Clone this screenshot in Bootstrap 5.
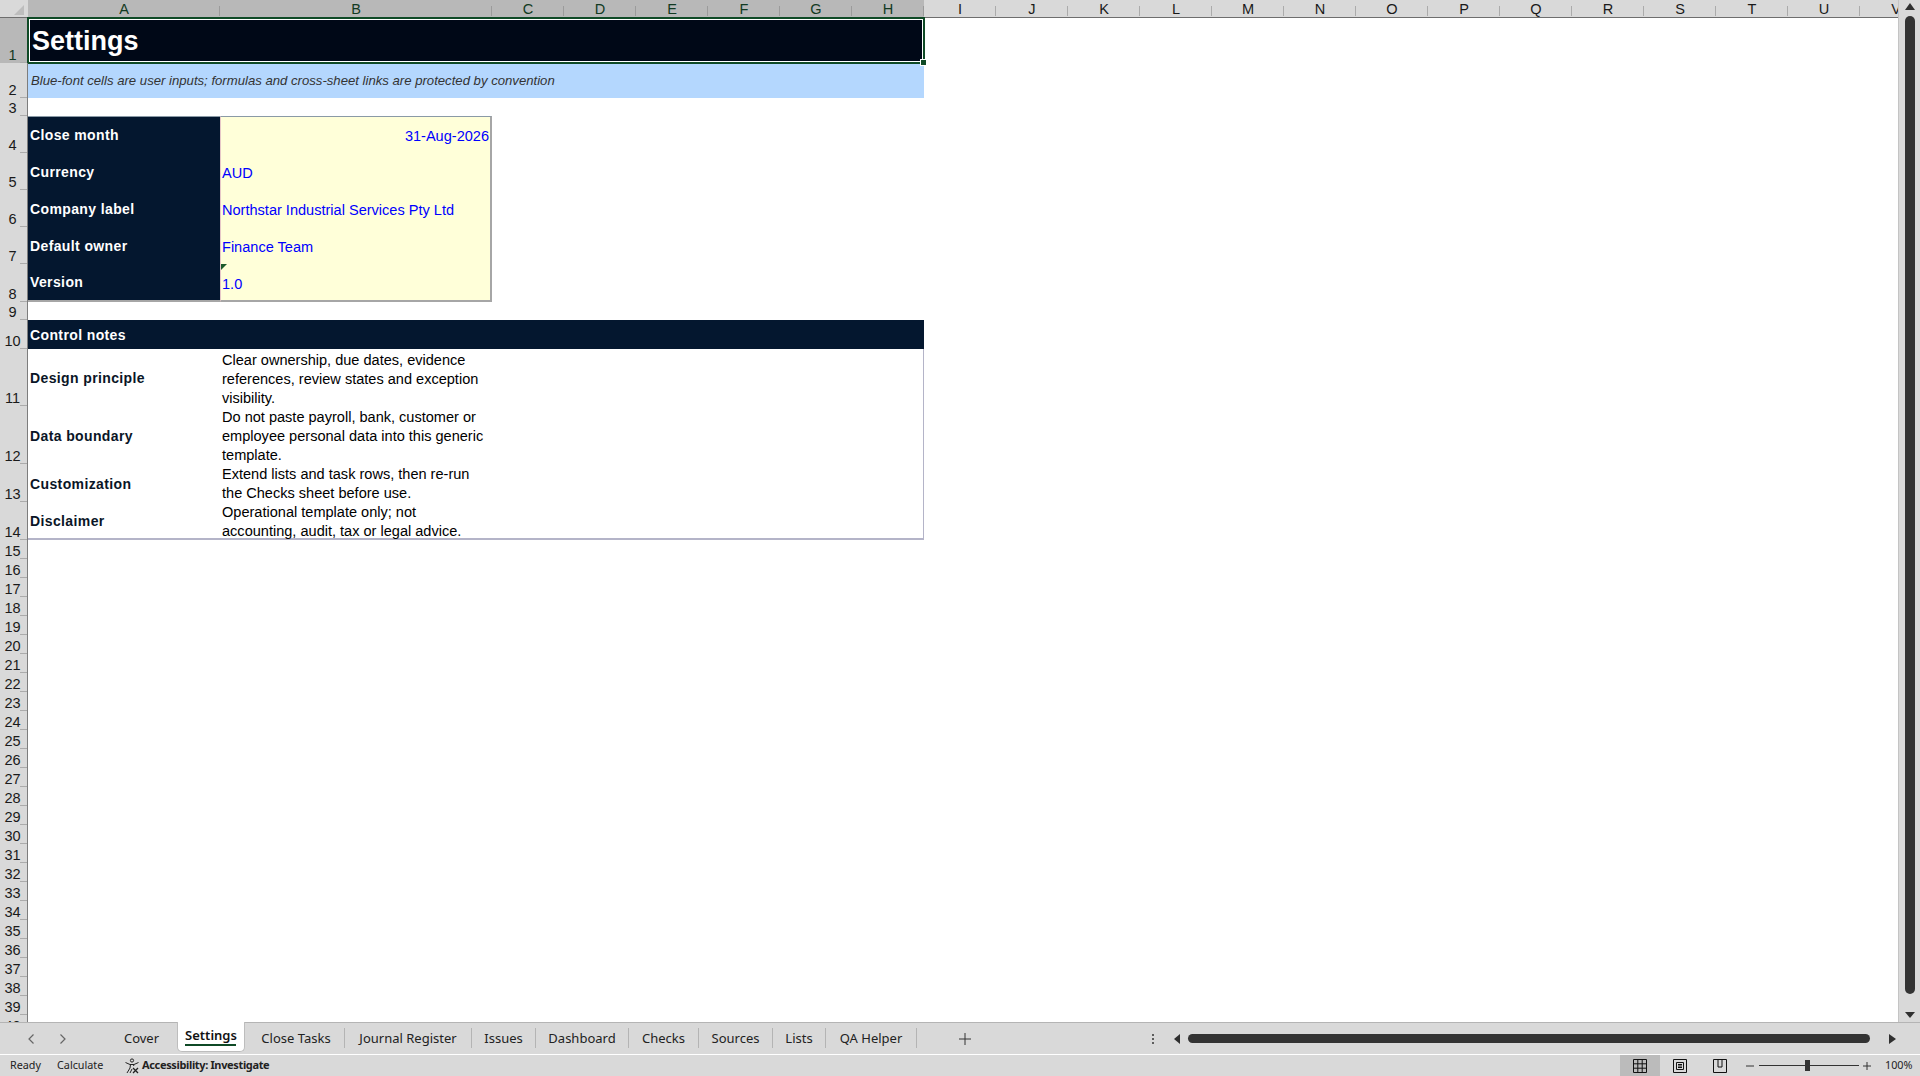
<!doctype html>
<html lang="en"><head><meta charset="utf-8"><title>Settings</title>
<link href="https://cdn.jsdelivr.net/npm/bootstrap@5.3.0/dist/css/bootstrap.min.css" rel="stylesheet">
<style>
html,body{height:100%;overflow:hidden;background:#fff}
.xl-app{height:1076px;font-family:"Liberation Sans",Arial,sans-serif;color:#000}
.xl-main{height:1022px}
.xl-view{flex:1 1 auto;overflow:hidden;min-width:0;border-right:1px solid #c4c4c4}
.xl-vbar{width:21px;background:#d9d9d9;padding-top:3px}
.tri-up{width:0;height:0;border:5px solid transparent;border-top:0;border-bottom:7px solid #2f2f2f}
.tri-dn{width:0;height:0;border:5px solid transparent;border-bottom:0;border-top:6px solid #2f2f2f}
.vthumb{width:10px;flex:1 1 auto;background:#333;border-radius:5px;margin:6px 0 18px}
table.sheet{table-layout:fixed;width:1932px;border-collapse:separate;border-spacing:0;font-size:14.55px;line-height:19px}
.sheet td,.sheet th{padding:0;box-sizing:border-box;overflow:hidden;white-space:nowrap}
.c0{width:28px}.ca{width:192px}.cb{width:272px}.cn{width:72px}
.h18{height:18px}.h19{height:19px}.h29{height:29px}.h35{height:35px}.h37{height:37px}.h38{height:38px}.h45{height:45px}.h57{height:57px}.h58{height:58px}
.corner{background:#d9d9d9;border-right:1px solid #d9d9d9;border-bottom:1px solid #6e6e6e;position:relative}
.corner::after{content:"";position:absolute;right:3px;bottom:2px;border-style:solid;border-width:0 0 10px 10px;border-color:transparent transparent #bdbdbd transparent}
.sheet th.colh{background:#d9d9d9;border-bottom:1px solid #6e6e6e;font-weight:400;text-align:center;color:#1a1a1a;position:relative;line-height:15px;vertical-align:top;padding-top:2px}
th.colh::after{content:"";position:absolute;right:0;bottom:1px;height:10px;width:1px;background:#ababab}
.sheet th.colh.on{background:#b8b8b8;color:#123a22}
th.colh.on::after{background:#9b9b9b}
.sheet th.rowh{background:#d9d9d9;border-right:1px solid #7d7d7d;font-weight:400;text-align:center;vertical-align:bottom;color:#1a1a1a;position:relative;padding-right:2px;line-height:16px}
th.rowh::after{content:"";position:absolute;right:0;bottom:0;height:1px;width:7px;background:#ababab}
.sheet th.rowh.on{background:#b8b8b8;color:#123a22}
.sheet td.title-cell{background:#000817;color:#fff;font-weight:700;font-size:27px;line-height:32px;position:relative;padding-left:4px;vertical-align:middle;overflow:visible}
.sel-box{position:absolute;inset:-1px -1px -1px -1px;border:2px solid #0f4a26;box-shadow:inset 0 0 0 1px #fff;pointer-events:none}
.fill-h{position:absolute;right:-4px;bottom:-4px;width:7px;height:7px;background:#0f4a26;border:1px solid #fff}
.sheet td.sub-cell{background:#b4d7fe;color:#333;font-style:italic;font-size:13.15px;padding-left:3px;vertical-align:middle}
.sheet td.lab{background:#04172f;color:#fff;font-weight:700;font-size:14px;letter-spacing:.38px;padding:1px 0 0 2px;vertical-align:middle}
.sheet td.val{background:#ffffd9;color:#0000ff;padding:3px 1px 0 1px;vertical-align:middle;border-right:2px solid #a6a6a6;border-left:1px solid #e6c7c7;position:relative}
.sheet td.box-t{border-top:1px solid #8a9aa6}
.sheet td.box-b{border-bottom:2px solid #a6a6a6}
.sheet td.val.box-b{padding-top:5px}
.err{position:absolute;left:0;top:0;border-style:solid;border-width:6px 6px 0 0;border-color:#1c5a2c transparent transparent transparent}
.sheet td.band{background:#04172f;color:#fff;font-weight:700;font-size:14px;letter-spacing:.38px;padding:1px 0 0 2px;vertical-align:middle}
.sheet td.nl{font-weight:700;color:#0a1526;font-size:14px;letter-spacing:.38px;padding:2px 0 0 2px;vertical-align:middle}
.sheet td.nv{white-space:normal;padding:0 0 0 2px;vertical-align:top;overflow:visible}
.nv-in{margin:2px 0 -2px}
.nv-in.low{margin:1px 0 -1px}
.nbot .nv-in.low{margin-bottom:-3px}
.sheet td.nend{border-right:1px solid #b4b4c8}
.sheet td.nbot{border-bottom:2px solid #b4b4c8}
.xl-tabs{height:33px;background:#d9d9d9;border-top:1px solid #b4b4b4;border-bottom:1px solid #fff;font-family:"Noto Sans",sans-serif;font-size:13px;color:#222}
.tab-nav{width:110px}
.xtab{text-align:center;position:relative;height:20px;line-height:20px;margin-top:5px;border-right:1px solid #b4b4b4;box-sizing:border-box;flex:0 0 auto}
.xtab.pre{border-right:0}
.xtab.act{background:#fff;font-weight:600;height:30px;margin-top:-1px;border:1px solid #bdbdbd;border-top:0;border-radius:0 0 5px 5px;color:#111;line-height:26px;margin-left:4px;margin-right:3px}
.xtab.act::after{content:"";position:absolute;left:7px;right:8px;top:22px;height:2px;background:#0f4a26}
.tw-cover{width:63px}.tw-set{width:68px}.tw-close{width:97px}.tw-jr{width:127px}.tw-iss{width:64px}.tw-dash{width:93px}.tw-chk{width:70px}.tw-src{width:74px}.tw-lst{width:53px}.tw-qa{width:91px}
.tplus{margin-left:42px}
.tdots{margin-left:180px}
.tri-l{width:0;height:0;border:5px solid transparent;border-left:0;border-right:6px solid #2f2f2f;margin-left:19px}
.hthumb{height:9px;background:#333;border-radius:4.5px;width:682px;margin-left:8px}
.tri-r{width:0;height:0;border:5px solid transparent;border-right:0;border-left:7px solid #2f2f2f;margin-left:19px}
.xl-status{height:21px;background:#d9d9d9;font-family:"Noto Sans",sans-serif;font-size:10.8px;color:#222}
.stat-ready{width:47px;margin-left:10px;flex:0 0 auto}
.stat-calc{width:67px;flex:0 0 auto}
.stat-ic{margin-right:2px;flex:0 0 auto}
.stat-act{font-weight:700;font-size:11px;letter-spacing:-.35px}
.vbtn{width:40px;height:21px}
.vbtn.on{background:#bbb}
.zminus{margin:0 5px 0 6px}
.zplus{margin-left:4px}
.zline{width:100px;height:1px;background:#333;position:relative}
.zthumb{position:absolute;left:46px;top:-5px;width:5px;height:11px;background:#333}
.zpct{width:35px;margin-left:14px}
</style></head>
<body>
<div class="xl-app d-flex flex-column">
 <div class="xl-main d-flex">
  <div class="xl-view">
   <table class="sheet">
    <colgroup><col class="c0"><col class="ca"><col class="cb"><col class="cn"><col class="cn"><col class="cn"><col class="cn"><col class="cn"><col class="cn"><col class="cn"><col class="cn"><col class="cn"><col class="cn"><col class="cn"><col class="cn"><col class="cn"><col class="cn"><col class="cn"><col class="cn"><col class="cn"><col class="cn"><col class="cn"><col class="cn"></colgroup>
    <tr class="h18"><th class="corner"></th><th class="colh on">A</th><th class="colh on">B</th><th class="colh on">C</th><th class="colh on">D</th><th class="colh on">E</th><th class="colh on">F</th><th class="colh on">G</th><th class="colh on">H</th><th class="colh">I</th><th class="colh">J</th><th class="colh">K</th><th class="colh">L</th><th class="colh">M</th><th class="colh">N</th><th class="colh">O</th><th class="colh">P</th><th class="colh">Q</th><th class="colh">R</th><th class="colh">S</th><th class="colh">T</th><th class="colh">U</th><th class="colh">V</th></tr>
    <tr class="h45"><th class="rowh on">1</th><td colspan="8" class="title-cell">Settings<div class="sel-box"><span class="fill-h"></span></div></td><td colspan="14"></td></tr>
    <tr class="h35"><th class="rowh">2</th><td colspan="8" class="sub-cell">Blue-font cells are user inputs; formulas and cross-sheet links are protected by convention</td><td colspan="14"></td></tr>
    <tr class="h18"><th class="rowh">3</th><td colspan="22"></td></tr>
    <tr class="h37"><th class="rowh">4</th><td class="lab box-t">Close month</td><td class="val box-t text-end">31-Aug-2026</td><td colspan="20"></td></tr>
    <tr class="h37"><th class="rowh">5</th><td class="lab">Currency</td><td class="val">AUD</td><td colspan="20"></td></tr>
    <tr class="h37"><th class="rowh">6</th><td class="lab">Company label</td><td class="val">Northstar Industrial Services Pty Ltd</td><td colspan="20"></td></tr>
    <tr class="h37"><th class="rowh">7</th><td class="lab">Default owner</td><td class="val">Finance Team</td><td colspan="20"></td></tr>
    <tr class="h38"><th class="rowh">8</th><td class="lab box-b">Version</td><td class="val box-b"><span class="err"></span>1.0</td><td colspan="20"></td></tr>
    <tr class="h18"><th class="rowh">9</th><td colspan="22"></td></tr>
    <tr class="h29"><th class="rowh">10</th><td colspan="8" class="band">Control notes</td><td colspan="14"></td></tr>
    <tr class="h57"><th class="rowh">11</th><td class="nl">Design principle</td><td class="nv"><div class="nv-in">Clear ownership, due dates, evidence references, review states and exception visibility.</div></td><td colspan="6" class="nend"></td><td colspan="14"></td></tr>
    <tr class="h58"><th class="rowh">12</th><td class="nl">Data boundary</td><td class="nv"><div class="nv-in">Do not paste payroll, bank, customer or employee personal data into this generic template.</div></td><td colspan="6" class="nend"></td><td colspan="14"></td></tr>
    <tr class="h38"><th class="rowh">13</th><td class="nl">Customization</td><td class="nv"><div class="nv-in low">Extend lists and task rows, then re-run the Checks sheet before use.</div></td><td colspan="6" class="nend"></td><td colspan="14"></td></tr>
    <tr class="h38"><th class="rowh">14</th><td class="nl nbot">Disclaimer</td><td class="nv nbot"><div class="nv-in low">Operational template only; not accounting, audit, tax or legal advice.</div></td><td colspan="6" class="nend nbot"></td><td colspan="14"></td></tr>
    <tr class="h19"><th class="rowh">15</th><td colspan="22"></td></tr>
    <tr class="h19"><th class="rowh">16</th><td colspan="22"></td></tr>
    <tr class="h19"><th class="rowh">17</th><td colspan="22"></td></tr>
    <tr class="h19"><th class="rowh">18</th><td colspan="22"></td></tr>
    <tr class="h19"><th class="rowh">19</th><td colspan="22"></td></tr>
    <tr class="h19"><th class="rowh">20</th><td colspan="22"></td></tr>
    <tr class="h19"><th class="rowh">21</th><td colspan="22"></td></tr>
    <tr class="h19"><th class="rowh">22</th><td colspan="22"></td></tr>
    <tr class="h19"><th class="rowh">23</th><td colspan="22"></td></tr>
    <tr class="h19"><th class="rowh">24</th><td colspan="22"></td></tr>
    <tr class="h19"><th class="rowh">25</th><td colspan="22"></td></tr>
    <tr class="h19"><th class="rowh">26</th><td colspan="22"></td></tr>
    <tr class="h19"><th class="rowh">27</th><td colspan="22"></td></tr>
    <tr class="h19"><th class="rowh">28</th><td colspan="22"></td></tr>
    <tr class="h19"><th class="rowh">29</th><td colspan="22"></td></tr>
    <tr class="h19"><th class="rowh">30</th><td colspan="22"></td></tr>
    <tr class="h19"><th class="rowh">31</th><td colspan="22"></td></tr>
    <tr class="h19"><th class="rowh">32</th><td colspan="22"></td></tr>
    <tr class="h19"><th class="rowh">33</th><td colspan="22"></td></tr>
    <tr class="h19"><th class="rowh">34</th><td colspan="22"></td></tr>
    <tr class="h19"><th class="rowh">35</th><td colspan="22"></td></tr>
    <tr class="h19"><th class="rowh">36</th><td colspan="22"></td></tr>
    <tr class="h19"><th class="rowh">37</th><td colspan="22"></td></tr>
    <tr class="h19"><th class="rowh">38</th><td colspan="22"></td></tr>
    <tr class="h19"><th class="rowh">39</th><td colspan="22"></td></tr>
    <tr class="h19"><th class="rowh">40</th><td colspan="22"></td></tr>
   </table>
  </div>
  <div class="xl-vbar d-flex flex-column align-items-center">
   <span class="tri-up"></span><span class="vthumb"></span><span class="tri-dn mb-1"></span>
  </div>
 </div>
 <div class="xl-tabs d-flex">
  <div class="tab-nav d-flex align-items-center">
   <svg width="64" height="14" viewBox="0 0 64 14" fill="none" stroke="#666" stroke-width="1.2" class="ms-4 flex-shrink-0"><path d="M9.500 2.500 5 7l4.500 4.500M36.500 2.500 41 7l-4.500 4.500"/></svg>
  </div>
  <div class="xtab pre tw-cover">Cover</div>
  <div class="xtab act tw-set">Settings</div>
  <div class="xtab tw-close">Close Tasks</div>
  <div class="xtab tw-jr">Journal Register</div>
  <div class="xtab tw-iss">Issues</div>
  <div class="xtab tw-dash">Dashboard</div>
  <div class="xtab tw-chk">Checks</div>
  <div class="xtab tw-src">Sources</div>
  <div class="xtab tw-lst">Lists</div>
  <div class="xtab tw-qa">QA Helper</div>
  <svg class="tplus align-self-center flex-shrink-0" width="12" height="12" viewBox="0 0 12 12" stroke="#333" stroke-width="1"><path d="M6 0v12M0 6h12"/></svg>
  <svg class="tdots align-self-center flex-shrink-0" width="4" height="12" viewBox="0 0 4 12" fill="#333"><circle cx="2" cy="2" r="1"/><circle cx="2" cy="6" r="1"/><circle cx="2" cy="10" r="1"/></svg>
  <span class="tri-l align-self-center"></span>
  <span class="hthumb align-self-center"></span>
  <span class="tri-r align-self-center"></span>
 </div>
 <div class="xl-status d-flex align-items-center">
  <span class="stat-ready">Ready</span>
  <span class="stat-calc">Calculate</span>
  <svg class="stat-ic" width="16" height="16" viewBox="0 0 16 16" fill="none" stroke="#222" stroke-width="1"><circle cx="8" cy="2.500" r="1.600"/><path d="M1.500 4.500 6 6.500h4l4.500-2M6.500 6.500 6 10l-3 5M9.500 6.500 9.800 8M8 11l-2 4"/><path d="m9 10 5 5M14 10l-5 5" stroke-width="1.300"/></svg>
  <span class="stat-act">Accessibility: Investigate</span>
  <div class="ms-auto d-flex align-items-center">
   <div class="vbtn on d-flex align-items-center justify-content-center"><svg width="14" height="14" viewBox="0 0 14 14" fill="none" stroke="#111"><path d="M.5.5h13v13H.5zM.5 4.800h13M.5 9.200h13M4.800.5v13M9.200.5v13"/></svg></div>
   <div class="vbtn d-flex align-items-center justify-content-center"><svg width="14" height="14" viewBox="0 0 14 14" fill="none" stroke="#111"><path d="M.5.5h13v13H.5zM3.500 3.500h7v7h-7zM5 5.500h4M5 7h4M5 8.500h4"/></svg></div>
   <div class="vbtn d-flex align-items-center justify-content-center"><svg width="14" height="14" viewBox="0 0 14 14" fill="none" stroke="#111"><path d="M.5.5h13v13H.5zM5 .5v7.500h4V.5"/></svg></div>
   <svg class="zminus" width="8" height="8" viewBox="0 0 8 8" stroke="#333"><path d="M0 4h8"/></svg>
   <div class="zline"><span class="zthumb"></span></div>
   <svg class="zplus" width="8" height="8" viewBox="0 0 8 8" stroke="#333"><path d="M0 4h8M4 0v8"/></svg>
   <span class="zpct">100%</span>
  </div>
 </div>
</div>
</body></html>
